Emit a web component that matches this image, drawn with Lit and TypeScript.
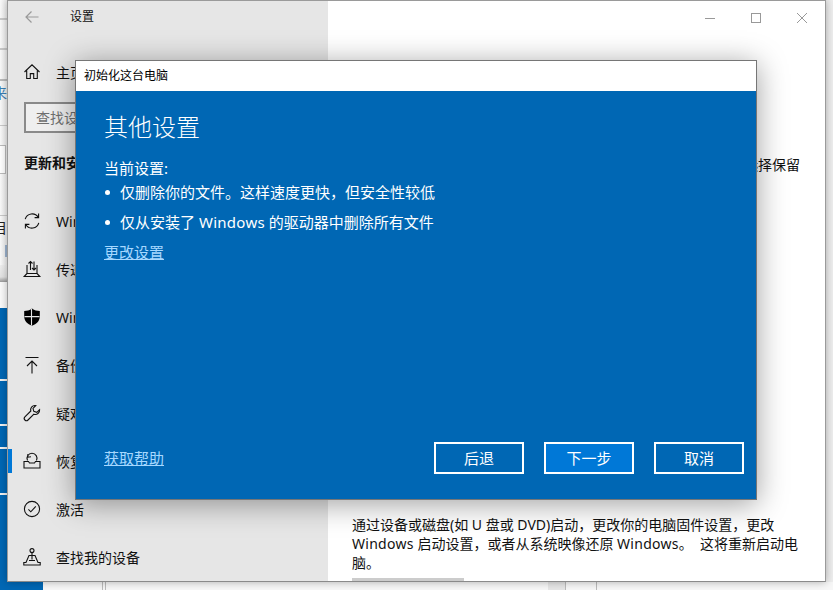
import { LitElement, html, css, svg } from "lit";
import { customElement } from "lit/decorators.js";

const ic = (body: unknown) => html`<svg class="ico" viewBox="0 0 20 20" width="20" height="20" fill="none" stroke="#111" stroke-width="1.1">${body}</svg>`;

const icons = {
  home: ic(svg`<path d="M2.5 10 10 2.8 17.5 10M4.7 8.4V16.5H8.3V11.6H11.7V16.5H15.3V8.4"/>`),
  sync: ic(svg`<path d="M3.2 8.2A7.2 7.2 0 0 1 16.2 6.2M16.8 11.8A7.2 7.2 0 0 1 3.8 13.8M16.6 2.6V6.6H12.6M3.4 17.4V13.4H7.4"/>`),
  deliver: ic(svg`<path d="M8.5 11V2.5M6.5 4.5 8.5 2.5 10.5 4.5M12 2.5V11M10 9 12 11 14 9"/><path d="M5 6V14.5L2.2 17.5H17.8L15 14.5V6M5 14.5H15"/>`),
  shield: html`<svg class="ico" viewBox="0 0 20 20" width="20" height="20"><path d="M10 1.5C12.5 3.3 15 4 17.8 4V9.5C17.8 14 14.5 17 10 18.8 5.5 17 2.2 14 2.2 9.5V4C5 4 7.5 3.3 10 1.5Z" fill="#000"/><path d="M9.5 2V18.5M2.5 9.6H17.5" stroke="#e6e6e6" stroke-width="1.1"/></svg>`,
  backup: ic(svg`<path d="M3.5 2.5H16.5M10 18.5V6M5 11 10 6 15 11"/>`),
  wrench: ic(svg`<path d="M13.2 2.5A4.3 4.3 0 0 0 8.8 8L2.9 13.9A2.2 2.2 0 0 0 2.9 17 2.2 2.2 0 0 0 6 17L11.9 11.2A4.3 4.3 0 0 0 17.6 6.7L14.8 9.3 11.8 8.4 11 5.4 13.8 2.6Z"/>`),
  restore: ic(svg`<path d="M5.5 9.5A5 5 0 1 1 14.5 9.5M5.6 3.2 6 6.2 9 5.8"/><path d="M2 11.5H6.5L7.5 13H12.5L13.5 11.5H18V18H2Z" transform="translate(0 -1)"/>`),
  check: ic(svg`<circle cx="10" cy="10" r="7.6"/><path d="M6.4 10.4 8.8 12.8 13.8 7.4"/>`),
  find: ic(svg`<circle cx="10" cy="3.6" r="2"/><path d="M10 5.6V12.5M7 8.5H13L16 15.5H18.2V18H1.8V15.5H4L7 8.5Z M7 13.5H13"/>`),
};

const en = (t: string) => html`<span class="en">${t}</span>`;

const navItems = [
  { icon: icons.sync, label: "Windows 更新" },
  { icon: icons.deliver, label: "传递优化" },
  { icon: icons.shield, label: "Windows 安全中心" },
  { icon: icons.backup, label: "备份" },
  { icon: icons.wrench, label: "疑难解答" },
  { icon: icons.restore, label: "恢复", active: true },
  { icon: icons.check, label: "激活" },
  { icon: icons.find, label: "查找我的设备" },
];

@customElement("app-root")
export class AppRoot extends LitElement {
  static styles = css`
    :host {
      display: block;
      position: relative;
      width: 833px;
      height: 590px;
      overflow: hidden;
      background: #fff;
      font-family: "Noto Sans", "Noto Sans CJK SC", sans-serif;
      color: #111;
    }
    .en { letter-spacing: 0.28px; }
    .behind { position: absolute; inset: 0; display: flex; flex-direction: column; background: linear-gradient(90deg, #fafafa 0, #eee 7px); }
    .b-top { height: 308px; position: relative; font-size: 14px; }
    .b-line { position: absolute; left: 0; width: 7px; background: #c9c9c9; }
    .l1 { top: 18px; height: 2px; }
    .l2 { top: 48px; height: 2px; }
    .l3 { top: 79px; height: 2px; background: #bbb; }
    .l4 { top: 125px; height: 1px; }
    .l5 { top: 215px; height: 1px; }
    .b-field { position: absolute; left: -4px; top: 145px; width: 8px; height: 27px; border: 1px solid #bbb; background: #fff; }
    .b-t1, .b-t2 { position: absolute; left: -7px; line-height: 16px; white-space: nowrap; }
    .b-t1 { top: 85px; color: #3a7fb5; }
    .b-t2 { top: 220px; color: #222; }
    .b-band { position: absolute; left: 0; top: 265px; width: 7px; height: 17px; background: linear-gradient(180deg, #efefef 0, #e4e4e4 70%, #9a9a9a 100%); }
    .b-white { position: absolute; left: 0; top: 282px; width: 7px; height: 26px; background: #fbfbfb; }
    .b-speck { position: absolute; left: 5px; top: 245px; width: 3px; height: 12px; background: #9db4d0; }
    .b-blue { flex: 1; background: #0067b4; width: 43px; }
    .b-blue i { display: block; height: 2px; background: #f2f2f2; position: absolute; left: 0; width: 7px; }
    .w1 { top: 379px; } .w2 { top: 424px; } .w3 { top: 447px; } .w4 { top: 493px; }
    .b-floor { position: absolute; left: 43px; right: 0; top: 582px; bottom: 0; background: #f7f7f7; }
    .b-floor span { position: absolute; top: 0; bottom: 0; width: 1px; background: #bbb; }
    .b-floor .f1 { left: 505px; width: 17px; background: #e6e6e6; }
    .f2 { left: 522px; } .f3 { left: 553px; } .f4 { left: 59px; } .f5 { left: 62px; }

    .win {
      position: absolute; left: 7px; top: 0; width: 819px; height: 582px;
      box-sizing: border-box; border: 1px solid #9a9a9a; border-bottom-color: #8a8a8a;
      background: #fff; display: flex; overflow: hidden;
      box-shadow: 0 0 8px rgba(0,0,0,.3);
    }
    .nav { width: 320px; flex: none; background: #e6e6e6; display: flex; flex-direction: column; }
    .topbar { height: 33px; display: flex; align-items: center; padding-left: 16px; gap: 30px; font-size: 12px; line-height: 16px; }
    .topbar svg { flex: none; }
    .home { height: 48px; margin-top: 16px; display: flex; align-items: center; font-size: 14px; }
    .row-ico { width: 48px; display: flex; justify-content: center; flex: none; }
    .search {
      margin: 7px 0 0 16px; width: 288px; height: 32px; box-sizing: border-box;
      border: 2px solid #8a8a8a; background: #efefef; color: #707070;
      font-size: 14px; line-height: 27px; padding-left: 10px;
    }
    .group { font-size: 14px; font-weight: 700; line-height: 20px; margin: 20px 0 0 16px; height: 44px; flex: none; }
    .item { height: 48px; flex: none; display: flex; align-items: center; font-size: 14px; position: relative; white-space: nowrap; }
    .item.active::before { content: ""; position: absolute; left: 0; top: 12px; width: 4px; height: 24px; background: #0078d7; }
    .ico { display: block; }

    .pane { flex: 1; padding: 59px 0 0 24px; position: relative; display: flex; flex-direction: column; min-width: 0; }
    .h1 { font-size: 28px; line-height: 38px; margin: -3px 0 0; font-weight: 400; color: #000; }
    .p { font-size: 14px; line-height: 19px; width: 450px; margin: 0; flex: none; }
    .p.a { margin-top: 60px; white-space: nowrap; }
    .p.b { margin-top: 341px; white-space: pre-wrap; }
    .pbtn { width: 112px; height: 32px; background: #ccc; margin-top: 6px; flex: none; }
    .ctrls { position: absolute; top: 0; right: 0; display: flex; }
    .ctrls div { width: 46px; height: 34px; display: flex; align-items: center; justify-content: center; }

    .dlg {
      position: absolute; left: 75px; top: 60px; width: 682px; height: 440px; box-sizing: border-box;
      border: 1px solid #767676; display: flex; flex-direction: column; background: #0067b4;
      box-shadow: 0 4px 28px rgba(0,0,0,.38);
    }
    .dlg-title { height: 30px; flex: none; background: #fff; font-size: 12px; line-height: 30px; padding-left: 8px; color: #000; }
    .dlg-body { flex: 1; display: flex; flex-direction: column; padding: 0 12px 25px 28px; color: #fff; font-size: 15px; min-height: 0; }
    .dlg-h { font-size: 24px; line-height: 32px; font-weight: 300; margin: 20px 0 0; }
    .cur { line-height: 20px; margin-top: 15px; }
    ul { list-style: none; margin: 4px 0 0; padding: 0; }
    li { line-height: 20px; display: flex; align-items: center; margin-bottom: 10px; white-space: pre; }
    li::before { content: ""; width: 5px; height: 5px; border-radius: 50%; background: #fff; margin: 0 10px 0 1px; flex: none; }
    .link { color: #a6d8ff; text-decoration: underline; line-height: 20px; }
    .foot { margin-top: auto; display: flex; align-items: center; }
    .foot .link { margin-right: auto; }
    .btn {
      width: 90px; height: 32px; box-sizing: border-box; border: 2px solid #fff; background: transparent;
      color: #fff; font: inherit; font-size: 15px; line-height: 26px; text-align: center; margin-left: 20px; padding: 0;
    }
    .btn.pri { background: #0078d7; }
  `;

  render() {
    return html`
      <div class="behind">
        <div class="b-top">
          <div class="b-line l1"></div><div class="b-line l2"></div><div class="b-line l3"></div>
          <div class="b-line l4"></div><div class="b-line l5"></div>
          <div class="b-field"></div>
          <span class="b-t1">来</span><span class="b-t2">目</span>
          <div class="b-band"></div><div class="b-white"></div><div class="b-speck"></div>
        </div>
        <div class="b-blue"><i class="w1"></i><i class="w2"></i><i class="w3"></i><i class="w4"></i></div>
        <div class="b-floor"><span class="f1"></span><span class="f2"></span><span class="f3"></span><span class="f4"></span><span class="f5"></span></div>
      </div>

      <div class="win">
        <nav class="nav">
          <div class="topbar">
            <svg width="16" height="16" viewBox="0 0 16 16" fill="none" stroke="#999" stroke-width="1.2"><path d="M14.5 8H2M7.5 2.5 2 8l5.5 5.5"/></svg>
            <span>设置</span>
          </div>
          <div class="home"><span class="row-ico">${icons.home}</span>主页</div>
          <div class="search">查找设置</div>
          <div class="group">更新和安全</div>
          ${navItems.map(
            (n) => html`<div class="item ${n.active ? "active" : ""}"><span class="row-ico">${n.icon}</span>${n.label}</div>`
          )}
        </nav>
        <main class="pane">
          <h1 class="h1">恢复</h1>
          <p class="p a">如果电脑未正常运行，初始化电脑可能会解决问题。初始化时，选择保留</p>
          <p class="p b">通过设备或磁盘(如 U 盘或 DVD)启动，更改你的电脑固件设置，更改 ${en("Windows")} 启动设置，或者从系统映像还原 ${en("Windows")}。  这将重新启动电脑。</p>
          <div class="pbtn"></div>
          <div class="ctrls">
            <div><svg width="10" height="10" viewBox="0 0 10 10" stroke="#999" fill="none"><path d="M0 5.5H10"/></svg></div>
            <div><svg width="10" height="10" viewBox="0 0 10 10" stroke="#999" fill="none"><rect x=".5" y=".5" width="9" height="9"/></svg></div>
            <div><svg width="10" height="10" viewBox="0 0 10 10" stroke="#999" fill="none"><path d="M0 0 10 10M10 0 0 10"/></svg></div>
          </div>
        </main>
      </div>

      <section class="dlg">
        <div class="dlg-title">初始化这台电脑</div>
        <div class="dlg-body">
          <h2 class="dlg-h">其他设置</h2>
          <div class="cur">当前设置:</div>
          <ul>
            <li>仅删除你的文件。这样速度更快，但安全性较低</li>
            <li>仅从安装了 ${en("Windows")} 的驱动器中删除所有文件</li>
          </ul>
          <span class="link">更改设置</span>
          <div class="foot">
            <span class="link">获取帮助</span>
            <button class="btn">后退</button>
            <button class="btn pri">下一步</button>
            <button class="btn">取消</button>
          </div>
        </div>
      </section>
    `;
  }
}
